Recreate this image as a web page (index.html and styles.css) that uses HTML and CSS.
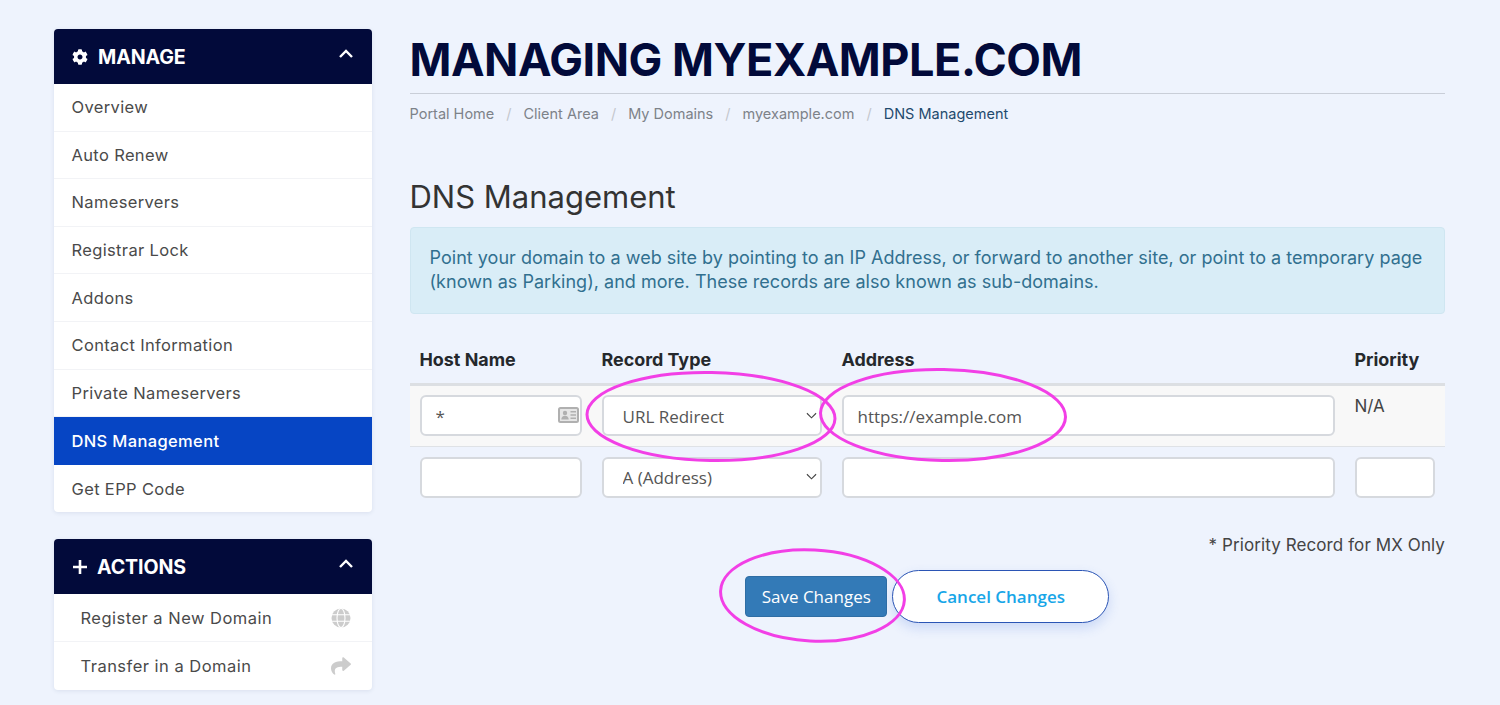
FILE: index.html
```html
<!DOCTYPE html>
<html lang="en">
<head>
  <meta charset="UTF-8">
  <title>DNS Management</title>
  <link rel="stylesheet" href="styles.css">
</head>
<body>
  <div class="page">
    <aside class="sidebar">
      <div class="panel">
        <div class="panel-head">
          <svg class="head-icon" viewBox="0 0 512 512"><path d="M487.4 315.7l-42.6-24.6c4.3-23.2 4.3-47 0-70.2l42.6-24.6c4.9-2.8 7.1-8.6 5.5-14-11.1-35.6-30-67.8-54.7-94.6-3.8-4.1-10-5.1-14.8-2.3L380.8 110c-17.9-15.4-38.5-27.3-60.8-35.1V25.8c0-5.6-3.9-10.5-9.4-11.7-36.7-8.2-74.3-7.8-109.2 0-5.5 1.2-9.4 6.1-9.4 11.7V75c-22.2 7.9-42.8 19.8-60.8 35.1L88.7 85.5c-4.9-2.8-11-1.9-14.8 2.3-24.7 26.7-43.6 58.9-54.7 94.6-1.7 5.4.6 11.2 5.5 14L67.3 221c-4.3 23.2-4.3 47 0 70.2l-42.6 24.6c-4.9 2.8-7.1 8.6-5.5 14 11.1 35.6 30 67.8 54.7 94.6 3.8 4.1 10 5.1 14.8 2.3l42.6-24.6c17.9 15.4 38.5 27.3 60.8 35.1v49.2c0 5.6 3.9 10.5 9.4 11.7 36.7 8.2 74.3 7.8 109.2 0 5.5-1.2 9.4-6.1 9.4-11.7v-49.2c22.2-7.9 42.8-19.8 60.8-35.1l42.6 24.6c4.9 2.8 11 1.9 14.8-2.3 24.7-26.7 43.6-58.9 54.7-94.6 1.5-5.5-.7-11.3-5.6-14.1zM256 336c-44.1 0-80-35.9-80-80s35.9-80 80-80 80 35.9 80 80-35.9 80-80 80z"/></svg>
          <span class="panel-title">MANAGE</span>
          <svg class="chevron" viewBox="0 0 16 10"><path d="M2 8l6-6 6 6"/></svg>
        </div>
        <a class="item" href="#">Overview</a>
        <a class="item" href="#">Auto Renew</a>
        <a class="item" href="#">Nameservers</a>
        <a class="item" href="#">Registrar Lock</a>
        <a class="item" href="#">Addons</a>
        <a class="item" href="#">Contact Information</a>
        <a class="item" href="#">Private Nameservers</a>
        <a class="item active" href="#">DNS Management</a>
        <a class="item last" href="#">Get EPP Code</a>
      </div>

      <div class="panel">
        <div class="panel-head">
          <svg class="head-icon plus" viewBox="0 0 16 16"><path d="M8 1v14M1 8h14"/></svg>
          <span class="panel-title">ACTIONS</span>
          <svg class="chevron" viewBox="0 0 16 10"><path d="M2 8l6-6 6 6"/></svg>
        </div>
        <a class="item action" href="#">Register a New Domain
          <svg class="item-icon globe" viewBox="0 0 20 20"><circle class="globe-ball" cx="10" cy="10" r="9.500"/><ellipse cx="10" cy="10" rx="4" ry="9.500"/><path d="M0 6.800h20M0 13.200h20"/></svg>
        </a>
        <a class="item action last" href="#">Transfer in a Domain
          <svg class="item-icon" viewBox="0 0 512 512"><path d="M503.691 189.836L327.687 37.851C312.281 24.546 288 35.347 288 56.015v80.053C127.371 137.907 0 170.1 0 322.326c0 61.441 39.581 122.309 83.333 154.132 13.653 9.931 33.111-2.533 28.077-18.631C66.066 312.814 132.917 274.316 288 272.085V360c0 20.7 24.3 31.453 39.687 18.164l176.004-152c11.071-9.562 11.086-26.753 0-36.328z"/></svg>
        </a>
      </div>
    </aside>

    <main class="content">
      <h1 class="page-title">MANAGING MYEXAMPLE.COM</h1>
      <nav class="crumbs">
        <a href="#">Portal Home</a><span class="sep">/</span>
        <a href="#">Client Area</a><span class="sep">/</span>
        <a href="#">My Domains</a><span class="sep">/</span>
        <a href="#">myexample.com</a><span class="sep">/</span>
        <span class="current">DNS Management</span>
      </nav>

      <h2 class="section-title">DNS Management</h2>
      <div class="alert">Point your domain to a web site by pointing to an IP Address, or forward to another site, or point to a temporary page (known as Parking), and more. These records are also known as sub-domains.</div>

      <table class="records">
        <thead>
          <tr>
            <th class="col-host">Host Name</th>
            <th class="col-type">Record Type</th>
            <th class="col-addr">Address</th>
            <th class="col-prio">Priority</th>
          </tr>
        </thead>
        <tbody>
          <tr class="striped">
            <td>
              <div class="host-field">
                <input class="field host-input" type="text" value="*">
                <svg class="card-icon" viewBox="0 0 21 16"><rect class="card-frame" x="1" y="1" width="19" height="14" rx="1.500"/><circle cx="7" cy="6" r="2.200"/><path d="M3.300 12.500c0-2.300 1.500-3.700 3.700-3.700s3.700 1.400 3.700 3.700z"/><path d="M12.500 4h5.500v1.600h-5.500zM12.500 7.200h5.500v1.600h-5.500zM12.500 10.400h5.500v1.600h-5.500z"/></svg>
              </div>
            </td>
            <td><select class="field pick"><option>URL Redirect</option></select></td>
            <td><input class="field" type="text" value="https://example.com"></td>
            <td class="na">N/A</td>
          </tr>
          <tr>
            <td><input class="field" type="text"></td>
            <td><select class="field pick"><option>A (Address)</option></select></td>
            <td><input class="field" type="text"></td>
            <td><input class="field" type="text"></td>
          </tr>
        </tbody>
      </table>

      <p class="note">* Priority Record for MX Only</p>

      <div class="buttons">
        <button class="btn save">Save Changes</button>
        <button class="btn cancel">Cancel Changes</button>
      </div>
    </main>
  </div>

  <!-- hand drawn circles on top of the screenshot -->
  <svg class="marks" viewBox="0 0 1500 705">
    <ellipse cx="711" cy="416.500" rx="124" ry="44" transform="rotate(1 711 416)"/>
    <ellipse cx="943" cy="415" rx="122.500" ry="45.500" transform="rotate(1 943 415)"/>
    <ellipse cx="812.500" cy="595.500" rx="92" ry="45.500" transform="rotate(3 812 595)"/>
  </svg>
</body>
</html>
```

FILE: styles.css
```css
* {
  box-sizing: border-box;
}

html, body {
  margin: 0;
  height: 705px;
  overflow: hidden;
}

body {
  position: relative;
  background: #eef3fd;
  font-family: "Inter", "Liberation Sans", sans-serif;
  color: #444;
}

a {
  text-decoration: none;
  color: inherit;
}

.page {
  display: flex;
  gap: 37.500px;
  padding: 29px 55px 0 53.500px;
}

/* sidebar */
.sidebar {
  width: 318.500px;
  flex: none;
}

.panel {
  background: #fff;
  border-radius: 4px;
  box-shadow: 0 1px 4px rgba(40, 60, 110, 0.1);
  margin-bottom: 27px;
}

.panel-head {
  display: flex;
  align-items: center;
  height: 55px;
  padding: 0 18px 0 18.500px;
  background: #020a3a;
  border-radius: 4px 4px 0 0;
  color: #fff;
}

.head-icon {
  width: 16px;
  height: 16px;
  margin-right: 10px;
  fill: #fff;
}

.head-icon.plus {
  fill: none;
  stroke: #fff;
  stroke-width: 2.600;
  margin-right: 9px;
}

.panel-title {
  flex: 1;
  font-size: 19.600px;
  font-weight: 700;
  letter-spacing: -0.1px;
}

.chevron {
  width: 16px;
  height: 10px;
  margin: -6px 0 0;
  fill: none;
  stroke: #fff;
  stroke-width: 2.400;
}

.item {
  display: flex;
  align-items: center;
  height: 47.600px;
  padding: 0 18px;
  font-size: 16.500px;
  letter-spacing: 0.35px;
  color: #4a4a4a;
  border-bottom: 1px solid #f2f3f6;
}

.item.last {
  border-bottom: 0;
}

.item.active {
  background: #0645c4;
  color: #fff;
  font-weight: 500;
  border-bottom: 0;
}

.item.action {
  justify-content: space-between;
  padding: 0 21px 0 27px;
  letter-spacing: 0.48px;
}

.item-icon {
  width: 20px;
  height: 20px;
  fill: #ccc;
}

.globe {
  fill: none;
  stroke: #fff;
  stroke-width: 1.100;
}

.globe-ball {
  fill: #ccc;
  stroke: none;
}

/* main column */
.content {
  flex: 1;
  min-width: 0;
}

.page-title {
  margin: 0;
  height: 65px;
  padding-top: 2px;
  border-bottom: 1px solid #c9ced8;
  font-size: 45px;
  line-height: 58px;
  font-weight: 700;
  letter-spacing: -0.45px;
  color: #020a3a;
  white-space: nowrap;
}

.crumbs {
  display: flex;
  align-items: center;
  height: 38px;
  font-size: 14.500px;
  color: #7d8289;
}

.sep {
  margin: 0 12px;
  color: #c4c7cd;
}

.current {
  color: #1f4a6e;
}

.section-title {
  margin: 42px 0 0;
  height: 53px;
  font-size: 31px;
  line-height: 46px;
  font-weight: 400;
  color: #333;
}

.alert {
  height: 87px;
  padding: 18px 19px;
  background: #d9edf7;
  border: 1px solid #cfe6f1;
  border-radius: 4px;
  font-size: 18px;
  line-height: 24px;
  letter-spacing: 0.025px;
  color: #31708f;
}

/* records table */
.records {
  width: 100%;
  margin-top: 32px;
  border-collapse: collapse;
  table-layout: fixed;
}

.records th {
  height: 38px;
  padding: 0 10px 9px;
  text-align: left;
  font-size: 17.900px;
  font-weight: 700;
  color: #25282c;
  border-bottom: 3px solid #dcdfe3;
}

.col-host { width: 182px; }
.col-type { width: 240px; }
.col-addr { width: 513px; }

.records td {
  height: 62px;
  padding: 0 10px;
  vertical-align: middle;
}

.striped td {
  background: #f8f8f8;
  border-bottom: 1px solid #dfe2e6;
}

.records td.na {
  vertical-align: top;
  padding-top: 10px;
  font-size: 17px;
  color: #444;
}

.field {
  display: block;
  width: 100%;
  height: 41px;
  padding: 1px 14px 0;
  background: #fff;
  border: 2px solid #d6d9de;
  border-radius: 6px;
  font-family: "Open Sans", sans-serif;
  font-size: 17px;
  color: #555;
  outline: none;
}

.pick {
  appearance: none;
  padding-left: 19px;
  background-image: url("data:image/svg+xml,%3Csvg xmlns='http://www.w3.org/2000/svg' viewBox='0 0 12 8'%3E%3Cpath d='M1 1l5 5 5-5' fill='none' stroke='%23444' stroke-width='1.200'/%3E%3C/svg%3E");
  background-repeat: no-repeat;
  background-position: right 3px center;
  background-size: 11px 8px;
}

.host-field {
  position: relative;
}

.host-input {
  padding-right: 40px;
}

.card-icon {
  position: absolute;
  top: 12px;
  right: 3px;
  width: 21px;
  height: 16px;
  fill: #b0b0b0;
}

.card-frame {
  fill: #e6e6e6;
  stroke: #b0b0b0;
  stroke-width: 2;
}

.note {
  margin: 26px 0 0;
  text-align: right;
  font-size: 17px;
  line-height: 22px;
  letter-spacing: 0.1px;
  color: #444;
}

.buttons {
  display: flex;
  justify-content: center;
  align-items: center;
  gap: 5px;
  margin-top: 14px;
}

.btn {
  font-family: "Open Sans", sans-serif;
  font-size: 17px;
  cursor: pointer;
}

.save {
  width: 142px;
  height: 41px;
  background: #337ab7;
  border: 1px solid #2e6da4;
  border-radius: 4px;
  color: #fff;
}

.cancel {
  width: 217px;
  height: 53px;
  background: #fff;
  border: 1px solid #2b55b5;
  border-radius: 27px;
  color: #17a6e8;
  font-weight: 600;
  box-shadow: 0 5px 12px rgba(60, 110, 220, 0.2);
}

/* annotation circles */
.marks {
  position: absolute;
  top: 0;
  left: 0;
  width: 1500px;
  height: 705px;
  fill: none;
  stroke: #f23fe6;
  stroke-width: 3;
  pointer-events: none;
}
```
